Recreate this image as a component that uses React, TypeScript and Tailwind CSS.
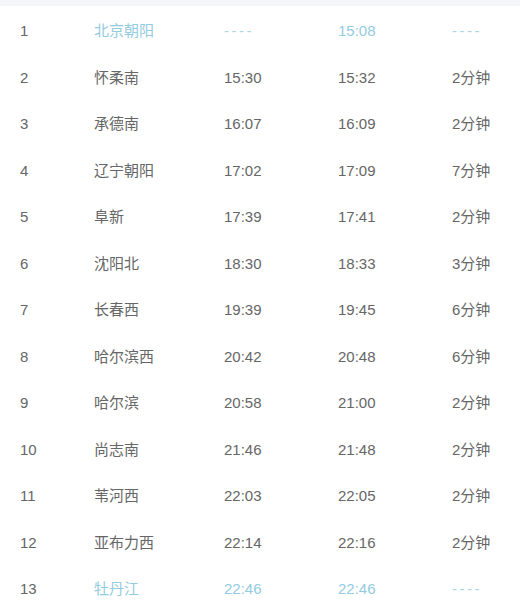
type Stop = {
  no: number;
  name: string;
  arrive: string;
  depart: string;
  wait: string;
};

const stops: Stop[] = [
  { no: 1, name: "北京朝阳", arrive: "----", depart: "15:08", wait: "----" },
  { no: 2, name: "怀柔南", arrive: "15:30", depart: "15:32", wait: "2分钟" },
  { no: 3, name: "承德南", arrive: "16:07", depart: "16:09", wait: "2分钟" },
  { no: 4, name: "辽宁朝阳", arrive: "17:02", depart: "17:09", wait: "7分钟" },
  { no: 5, name: "阜新", arrive: "17:39", depart: "17:41", wait: "2分钟" },
  { no: 6, name: "沈阳北", arrive: "18:30", depart: "18:33", wait: "3分钟" },
  { no: 7, name: "长春西", arrive: "19:39", depart: "19:45", wait: "6分钟" },
  { no: 8, name: "哈尔滨西", arrive: "20:42", depart: "20:48", wait: "6分钟" },
  { no: 9, name: "哈尔滨", arrive: "20:58", depart: "21:00", wait: "2分钟" },
  { no: 10, name: "尚志南", arrive: "21:46", depart: "21:48", wait: "2分钟" },
  { no: 11, name: "苇河西", arrive: "22:03", depart: "22:05", wait: "2分钟" },
  { no: 12, name: "亚布力西", arrive: "22:14", depart: "22:16", wait: "2分钟" },
  { no: 13, name: "牡丹江", arrive: "22:46", depart: "22:46", wait: "----" },
];

// blue for first/last station, dashes get spaced out like the app does
function Cell({ text, edge }: { text: string; edge: boolean }) {
  const dash = text === "----";
  return (
    <div
      className={
        (edge ? "text-[#93cbe0] " : "") + (dash ? "tracking-[2.5px] text-[#a9d6e6]" : "")
      }
    >
      {text}
    </div>
  );
}

export default function App() {
  return (
    <div
      className="w-[520px] h-[600px] bg-white overflow-hidden text-[15px] text-[#666666]"
      style={{ fontFamily: '"Liberation Sans", "Noto Sans CJK SC", sans-serif' }}
    >
      <div className="h-[6px] bg-[#f5f6fa]" />
      {stops.map((s) => {
        const edge = s.no === 1 || s.no === stops.length;
        return (
          <div
            key={s.no}
            className="h-[46.5px] pt-[4px] pl-[20px] grid grid-cols-[74px_130px_114px_114px_1fr] items-center"
          >
            <div>{s.no}</div>
            <Cell text={s.name} edge={edge} />
            <Cell text={s.arrive} edge={edge} />
            <Cell text={s.depart} edge={edge} />
            <Cell text={s.wait} edge={edge} />
          </div>
        );
      })}
    </div>
  );
}
